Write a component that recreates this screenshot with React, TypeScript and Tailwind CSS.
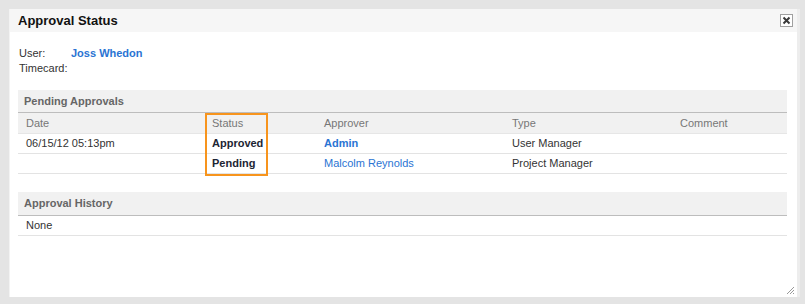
export default function App() {
    const rows = [
        { date: "06/15/12 05:13pm", status: "Approved", approver: "Admin", bold: true, type: "User Manager" },
        { date: "", status: "Pending", approver: "Malcolm Reynolds", bold: false, type: "Project Manager" },
    ]

    return (
        <div className="w-[805px] h-[304px] bg-[#e4e4e4] pt-[9px] pl-[9px] font-['Liberation_Sans',Arial,sans-serif] text-[11px] text-[#333]">
            <div className="relative w-[791px] h-[288px] bg-white border-r-[3px] border-[#ededed] border-l border-l-[#f3f3f3]">
                {/* title bar */}
                <div className="h-[23px] bg-[#f6f6f6] flex items-center justify-between pl-[8px] pr-[4px]">
                    <span className="text-[13px] font-bold text-[#111]">Approval Status</span>
                    <button className="w-[13px] h-[13px] border border-[#a0a0a0] bg-white flex items-center justify-center">
                        <svg width="9" height="9" viewBox="0 0 9 9">
                            <path d="M1.5 1.5 L7.5 7.5 M7.5 1.5 L1.5 7.5" stroke="#3a3a3a" strokeWidth="2" />
                        </svg>
                    </button>
                </div>

                <div className="px-[8px] pt-[14px]">
                    <div className="flex leading-[15px]">
                        <span className="w-[53px] pl-[1px]">User:</span>
                        <span className="font-bold text-[#2a74d3]">Joss Whedon</span>
                    </div>
                    <div className="leading-[15px] pl-[1px]">Timecard:</div>

                    {/* pending approvals */}
                    <div className="relative mt-[14px] w-[769px]">
                        <div className="h-[23px] bg-[#f1f1f1] border-b border-[#bdbdbd] flex items-center pl-[6px] font-bold text-[#666]">
                            Pending Approvals
                        </div>
                        <div className="grid grid-cols-[186px_112px_188px_168px_1fr] h-[21px] items-center bg-[#f1f1f1] text-[#777] border-b border-[#e6e6e6]">
                            <span className="pl-[8px]">Date</span>
                            <span className="pl-[8px]">Status</span>
                            <span className="pl-[8px]">Approver</span>
                            <span className="pl-[8px]">Type</span>
                            <span className="pl-[8px]">Comment</span>
                        </div>
                        {rows.map((r) => (
                            <div key={r.status} className="grid grid-cols-[186px_112px_188px_168px_1fr] h-[20px] items-center border-b border-[#e3e3e3]">
                                <span className="pl-[8px]">{r.date}</span>
                                <span className="pl-[8px] font-bold text-[#1c2533]">{r.status}</span>
                                <span className={r.bold ? "pl-[8px] font-bold text-[#2a74d3]" : "pl-[8px] text-[#2a74d3]"}>{r.approver}</span>
                                <span className="pl-[8px]">{r.type}</span>
                                <span className="pl-[8px]"></span>
                            </div>
                        ))}
                        <div className="absolute left-[187px] top-[23px] w-[63px] h-[63px] border-2 border-[#f7941d]"></div>
                    </div>

                    {/* approval history */}
                    <div className="mt-[18px] w-[769px]">
                        <div className="h-[24px] bg-[#f1f1f1] border-b border-[#bdbdbd] flex items-center pl-[6px] font-bold text-[#666]">
                            Approval History
                        </div>
                        <div className="h-[20px] flex items-center pl-[8px] border-b border-[#e3e3e3]">None</div>
                    </div>
                </div>

                {/* resize grip */}
                <svg className="absolute right-[2px] bottom-[2px]" width="10" height="10" viewBox="0 0 10 10">
                    <path d="M9 2 L2 9 M9 5 L5 9 M9 8 L8 9" stroke="#999" strokeWidth="1" />
                </svg>
            </div>
        </div>
    )
}
